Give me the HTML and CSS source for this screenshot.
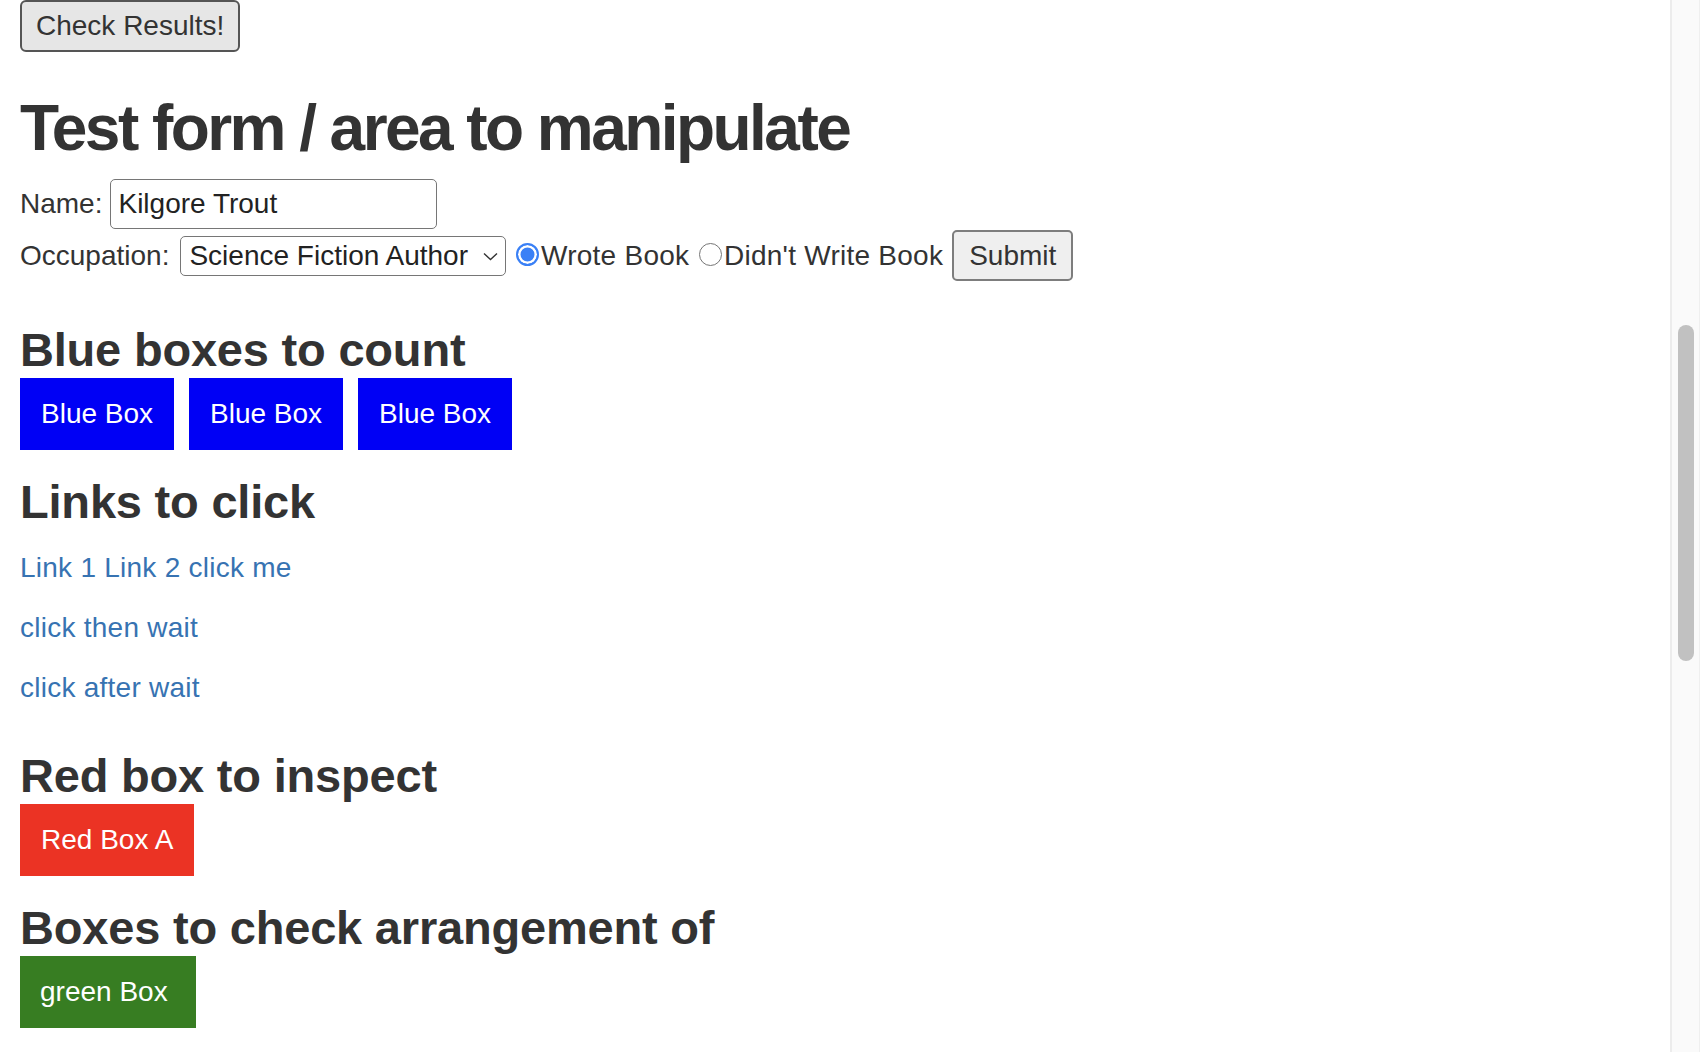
FILE: index.html
```html
<!DOCTYPE html>
<html lang="en">
<head>
<meta charset="utf-8">
<title>Test form</title>
<link rel="stylesheet" href="styles.css">
</head>
<body>
<div class="page">
  <main class="content">
    <button class="check-btn" type="button">Check Results!</button>
    <h1 class="title">Test form / area to manipulate</h1>
    <form class="test-form">
      <div class="form-row">
        <span class="label">Name:</span>
        <input class="text-input" type="text" value="Kilgore Trout">
      </div>
      <div class="form-row form-row-tall">
        <span class="label">Occupation:</span>
        <div class="select-wrap">
          <select class="select">
            <option>Science Fiction Author</option>
          </select>
          <svg class="chevron" width="15" height="9" viewBox="0 0 15 9"><polyline points="1,1.5 7.5,7.5 14,1.5" fill="none" stroke="#333" stroke-width="1.4"/></svg>
        </div>
        <input class="radio radio-first" type="radio" name="wrote" checked>
        <span class="radio-label">Wrote Book</span>
        <input class="radio radio-second" type="radio" name="wrote">
        <span class="radio-label">Didn't Write Book</span>
        <button class="submit-btn" type="button">Submit</button>
      </div>
    </form>

    <h2 class="section-title">Blue boxes to count</h2>
    <div class="box-row">
      <div class="box box-blue">Blue Box</div>
      <div class="box box-blue">Blue Box</div>
      <div class="box box-blue">Blue Box</div>
    </div>

    <h2 class="section-title">Links to click</h2>
    <div class="links">
      <p class="link-line"><a href="#">Link 1</a> <a href="#">Link 2</a> <a href="#">click me</a></p>
      <p class="link-line"><a href="#">click then wait</a></p>
      <p class="link-line"><a href="#">click after wait</a></p>
    </div>

    <h2 class="section-title">Red box to inspect</h2>
    <div class="box-row">
      <div class="box box-red">Red Box A</div>
    </div>

    <h2 class="section-title">Boxes to check arrangement of</h2>
    <div class="box-row">
      <div class="box box-green">green Box</div>
    </div>
  </main>
  <div class="scrollbar"><div class="thumb"></div></div>
</div>
</body>
</html>
```

FILE: styles.css
```css
* { box-sizing: border-box; }

html, body {
  margin: 0;
  padding: 0;
  background: #fff;
}

body {
  font-family: "Liberation Sans", Arial, Helvetica, sans-serif;
  font-size: 28px;
  line-height: 40px;
  color: #333;
}

.page {
  display: flex;
  height: 1052px;
  overflow: hidden;
}

.content {
  flex: 1;
  display: flex;
  flex-direction: column;
  align-items: flex-start;
  padding-left: 20px;
  min-width: 0;
}

.check-btn {
  height: 52px;
  padding: 0 14px;
  margin: 0;
  font: inherit;
  color: #333;
  background: #e6e6e6;
  border: 2px solid #555;
  border-radius: 6px;
}

.title {
  margin: 41px 0 16px;
  font-size: 64px;
  line-height: 70px;
  font-weight: 700;
  letter-spacing: -2.55px;
  white-space: nowrap;
}

.test-form {
  display: flex;
  flex-direction: column;
  gap: 1px;
  margin-bottom: 17px;
}

.form-row {
  display: flex;
  align-items: center;
  height: 50px;
}

.form-row-tall { height: 51px; }

.label { white-space: nowrap; }

.text-input {
  width: 327px;
  height: 50px;
  margin-left: 8px;
  padding: 0 7px;
  font: inherit;
  color: #222;
  border: 1.5px solid #767676;
  border-radius: 5px;
  background: #fff;
}

.select-wrap {
  position: relative;
  width: 326px;
  height: 40px;
  margin-left: 11px;
}

.select {
  appearance: none;
  -webkit-appearance: none;
  width: 100%;
  height: 100%;
  margin: 0;
  padding: 0 8px;
  font: inherit;
  line-height: normal;
  color: #222;
  background: #fff;
  border: 1.5px solid #767676;
  border-radius: 5px;
}

.chevron {
  position: absolute;
  right: 8px;
  top: 16px;
}

.radio {
  appearance: none;
  -webkit-appearance: none;
  width: 23px;
  height: 23px;
  margin: 0 0 3px;
  border-radius: 50%;
  border: 1.5px solid #767676;
  background: #fff;
  flex: none;
}

.radio:checked {
  border: 2.5px solid #3a80f6;
  background: #3a80f6;
  box-shadow: inset 0 0 0 2.5px #fff;
}

.radio-first { margin-left: 9.6px; }
.radio-second { margin-left: 9.7px; }

.radio-label {
  margin-left: 2px;
  letter-spacing: 0.25px;
  white-space: nowrap;
}

.submit-btn {
  height: 51px;
  margin-left: 9px;
  padding: 0 15px;
  font: inherit;
  color: #333;
  background: #efefef;
  border: 2px solid #7d7d7d;
  border-radius: 5px;
}

.section-title {
  margin: 26px 0 2px;
  font-size: 47px;
  line-height: 52px;
  font-weight: 700;
  letter-spacing: -0.2px;
  white-space: nowrap;
}

.box-row {
  display: flex;
  gap: 15px;
}

.box {
  padding: 16px 20px;
  color: #fff;
  white-space: nowrap;
}

.box-blue { width: 154px; background: #0000f5; padding-left: 21px; }
.box-red { width: 174px; background: #eb3324; padding-left: 21px; }
.box-green { width: 176px; background: #377d22; }

.links {
  display: flex;
  flex-direction: column;
  gap: 20px;
  padding: 18px 0 16px;
}

.link-line {
  margin: 0;
  letter-spacing: 0.25px;
}

.link-line a {
  color: #3773b2;
  text-decoration: none;
}

.scrollbar {
  flex: none;
  width: 30px;
  height: 100%;
  background: #fafafa;
  border-left: 2px solid #ececec;
  border-right: 1px solid #efefef;
  padding-left: 6px;
}

.thumb {
  width: 16px;
  height: 336px;
  margin-top: 325px;
  border-radius: 8px;
  background: #c1c1c1;
}
```
